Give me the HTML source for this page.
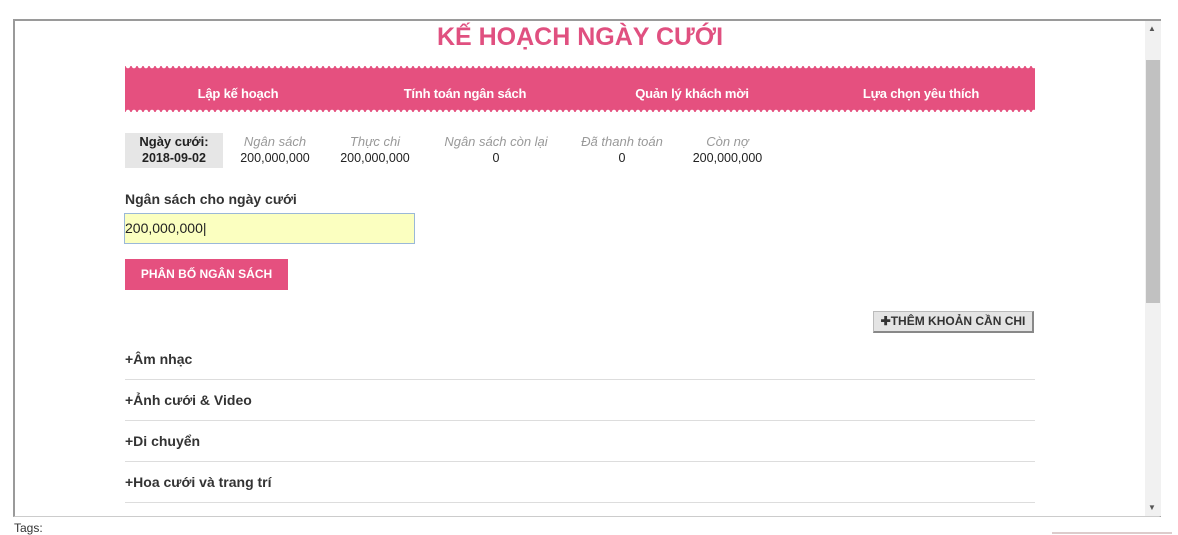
<!DOCTYPE html>
<html><head><meta charset="utf-8"><style>
body{margin:0;width:1178px;height:534px;background:#fff;font-family:"Liberation Sans",sans-serif;position:relative;overflow:hidden}
.a{position:absolute}
.frame{left:13px;top:19px;width:1148px;height:498px;border:2px solid #9a9a9a;border-bottom:1px solid #ccc;box-sizing:border-box}
.title{left:0;width:1160px;top:23px;text-align:center;color:#e05080;font-size:25px;font-weight:bold}
.nav{left:125px;top:66px;width:910px;height:46px;background:#e5507f;
 background-image:radial-gradient(circle at 3px 0,#fff 2px,transparent 2.5px),radial-gradient(circle at 3px 46px,#fff 2px,transparent 2.5px);
 background-size:6px 46px;background-repeat:repeat-x}
.nav span{position:absolute;top:20px;color:#fff;font-weight:bold;font-size:13px;transform:translateX(-50%);white-space:nowrap;letter-spacing:-0.2px}
.st{top:134px;text-align:center;font-size:12.5px;color:#222;white-space:nowrap}
.st i{color:#999;display:block;font-size:13px;margin-bottom:2px}
.row{left:125px;width:910px;height:40px;border-bottom:1px solid #ddd;font-weight:bold;font-size:14px;color:#333;line-height:40px}
</style></head><body>
<div class="a frame"></div>
<div class="a" style="left:1145px;top:21px;width:16px;height:495px;background:#f1f1f1"></div>
<div class="a" style="left:1146px;top:60px;width:14px;height:243px;background:#c1c1c1"></div>
<div class="a" style="left:1148px;top:24px;font-size:8px;color:#555">▲</div>
<div class="a" style="left:1148px;top:503px;font-size:8px;color:#555">▼</div>
<div class="a title">KẾ HOẠCH NGÀY CƯỚI</div>
<div class="a nav"><span style="left:113px">Lập kế hoạch</span><span style="left:340px">Tính toán ngân sách</span><span style="left:567px">Quản lý khách mời</span><span style="left:796px">Lựa chọn yêu thích</span></div>
<div class="a" style="left:125px;top:133px;width:98px;height:35px;background:#e6e6e6"></div>
<div class="a st" style="left:125px;width:98px;font-weight:bold"><div style="font-size:13px;margin-bottom:2px">Ngày cưới:</div>2018-09-02</div>
<div class="a st" style="left:230px;width:90px"><i>Ngân sách</i>200,000,000</div>
<div class="a st" style="left:330px;width:90px"><i>Thực chi</i>200,000,000</div>
<div class="a st" style="left:436px;width:120px"><i>Ngân sách còn lại</i>0</div>
<div class="a st" style="left:572px;width:100px"><i>Đã thanh toán</i>0</div>
<div class="a st" style="left:680px;width:95px"><i>Còn nợ</i>200,000,000</div>
<div class="a" style="left:125px;top:191px;font-size:14px;font-weight:bold;color:#333">Ngân sách cho ngày cưới</div>
<div class="a" style="left:124px;top:213px;width:291px;height:31px;box-sizing:border-box;border:1px solid #9ab8d8;background:#fbffc0;font-size:14px;line-height:29px;color:#222">200,000,000|</div>
<div class="a" style="left:125px;top:259px;width:163px;height:31px;background:#e5507f;color:#fff;font-size:12px;font-weight:bold;text-align:center;line-height:30px">PHÂN BỐ NGÂN SÁCH</div>
<div class="a" style="left:873px;top:311px;width:161px;height:22px;box-sizing:border-box;background:#e4e4e4;border:1px solid #bbb;border-right:2px solid #888;border-bottom:2px solid #888;font-size:12px;font-weight:bold;color:#333;text-align:center;line-height:19px;white-space:nowrap">✚THÊM KHOẢN CẦN CHI</div>
<div class="a row" style="top:339px">+Âm nhạc</div>
<div class="a row" style="top:380px">+Ảnh cưới &amp; Video</div>
<div class="a row" style="top:421px">+Di chuyển</div>
<div class="a row" style="top:462px">+Hoa cưới và trang trí</div>
<div class="a" style="left:14px;top:521px;font-size:12px;color:#333">Tags:</div>
<div class="a" style="left:1052px;top:532px;width:120px;height:2px;background:#dcc"></div>
</body></html>
